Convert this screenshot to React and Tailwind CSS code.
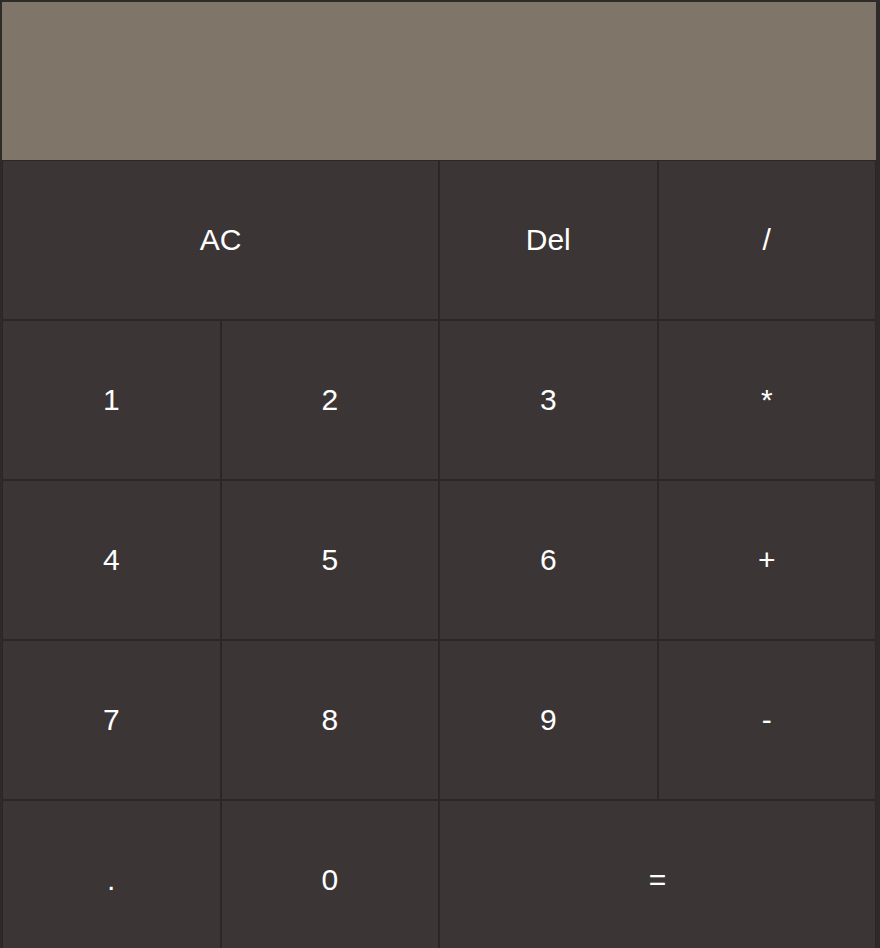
const KEYS = [
  { label: "AC", span: "col-span-2" },
  { label: "Del" },
  { label: "/" },
  { label: "1" },
  { label: "2" },
  { label: "3" },
  { label: "*" },
  { label: "4" },
  { label: "5" },
  { label: "6" },
  { label: "+" },
  { label: "7" },
  { label: "8" },
  { label: "9" },
  { label: "-" },
  { label: "." },
  { label: "0" },
  { label: "=", span: "col-span-2" },
];

export default function App() {
  return (
    <div className="h-[948px] w-[880px] overflow-hidden bg-[#2e2a2a] pl-[2px] pr-[4px] pt-[2px] font-['Liberation_Sans',Arial,sans-serif]">
      <div className="h-[158px] w-full bg-[#807569]" />
      <div className="grid grid-cols-4">
        {KEYS.map((key) => (
          <button
            key={key.label}
            type="button"
            className={`flex h-[160px] items-center justify-center border border-[#2b2727] bg-[#3b3535] pb-[2px] text-[30px] text-white ${key.span || ""}`}
          >
            {key.label}
          </button>
        ))}
      </div>
    </div>
  );
}
